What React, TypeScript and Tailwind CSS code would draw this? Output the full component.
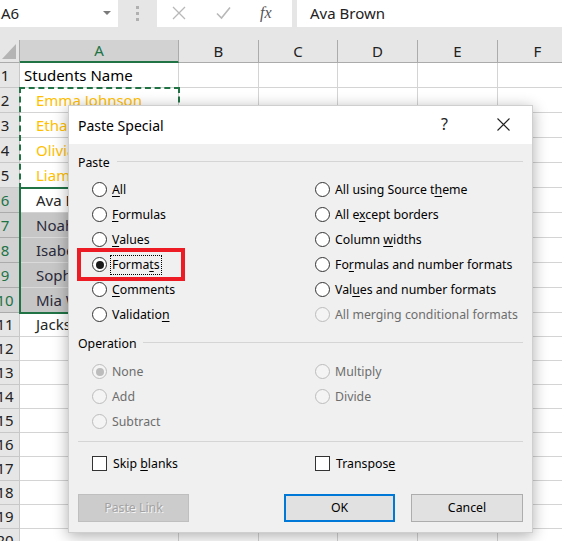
import React from 'react';

const GREEN = '#217346';

type Row = { n: number; text?: string; kind?: 'copy' | 'active' | 'sel' | 'plain' | 'head' };

const rows: Row[] = [
  { n: 1, text: 'Students Name', kind: 'head' },
  { n: 2, text: 'Emma Johnson', kind: 'copy' },
  { n: 3, text: 'Ethan Williams', kind: 'copy' },
  { n: 4, text: 'Olivia Smith', kind: 'copy' },
  { n: 5, text: 'Liam Jones', kind: 'copy' },
  { n: 6, text: 'Ava Brown', kind: 'active' },
  { n: 7, text: 'Noah Davis', kind: 'sel' },
  { n: 8, text: 'Isabella Garcia', kind: 'sel' },
  { n: 9, text: 'Sophia Miller', kind: 'sel' },
  { n: 10, text: 'Mia Wilson', kind: 'sel' },
  { n: 11, text: 'Jackson Taylor', kind: 'plain' },
  ...Array.from({ length: 9 }, (_, i) => ({ n: 12 + i })),
];

// underline one letter, like a Windows access key
function Acc({ text, at, disabled }: { text: string; at?: number; disabled?: boolean }) {
  if (at === undefined || disabled) return <span>{text}</span>;
  return (
    <span>
      {text.slice(0, at)}
      <span className="underline underline-offset-[2px]">{text[at]}</span>
      {text.slice(at + 1)}
    </span>
  );
}

function Radio({ label, at, checked, disabled, focus }: { label: string; at?: number; checked?: boolean; disabled?: boolean; focus?: boolean }) {
  return (
    <div className="flex h-[25px] items-center pl-[14px]">
      <span
        className={`flex h-[15px] w-[15px] shrink-0 items-center justify-center rounded-full border ${disabled ? 'border-[#bcbcbc] bg-[#f4f4f4]' : 'border-[#333] bg-white'}`}
      >
        {checked && <span className={`h-[8px] w-[8px] rounded-full ${disabled ? 'bg-[#bcbcbc]' : 'bg-[#1a1a1a]'}`} />}
      </span>
      <span
        className={`whitespace-nowrap leading-[18px] ${disabled ? 'text-[#6d6d6d]' : 'text-black'} ${focus ? 'ml-[4px] px-[1px] outline outline-1 outline-dotted outline-black' : 'ml-[5px]'}`}
      >
        <Acc text={label} at={at} disabled={disabled} />
      </span>
    </div>
  );
}

function Check({ label, at }: { label: string; at: number }) {
  return (
    <div className="flex h-[25px] items-center pl-[14px]">
      <span className="h-[15px] w-[15px] shrink-0 border border-[#333] bg-white" />
      <span className="ml-[6px] leading-[18px] text-black">
        <Acc text={label} at={at} />
      </span>
    </div>
  );
}

function GroupHead({ label, box, lab, line }: { label: string; box: string; lab: string; line: string }) {
  return (
    <div className={`flex items-start ${box}`}>
      <span className={`leading-[18px] text-black ${lab}`}>{label}</span>
      <span className={`ml-[7px] h-px flex-1 bg-[#d5d5d5] ${line}`} />
    </div>
  );
}

function FormulaBar() {
  return (
    <div className="relative h-[40px] bg-[#e6e6e6]">
      <div className="flex h-[27px]">
        <div className="relative flex w-[118px] items-center bg-white pl-[1px] text-[15px] text-[#222]">
          A6
          <span className="absolute left-[103px] top-[11px] h-0 w-0 border-x-[4px] border-t-[4px] border-x-transparent border-t-[#7a7a7a]" />
        </div>
        <div className="flex w-[39px] flex-col items-center justify-center gap-[3px]">
          <span className="h-[3px] w-[3px] bg-[#b0b0b0]" />
          <span className="h-[3px] w-[3px] bg-[#b0b0b0]" />
          <span className="h-[3px] w-[3px] bg-[#b0b0b0]" />
        </div>
        <div className="relative w-[135px] bg-white">
          <svg className="absolute left-[15px] top-[6px]" width="14" height="14" viewBox="0 0 14 14">
            <path d="M1 1 L13 13 M13 1 L1 13" stroke="#b8b8b8" strokeWidth="1.3" fill="none" />
          </svg>
          <svg className="absolute left-[59px] top-[6px]" width="15" height="14" viewBox="0 0 15 14">
            <path d="M1 7.5 L5.5 12 L14 1.5" stroke="#b8b8b8" strokeWidth="1.6" fill="none" />
          </svg>
          <span className="absolute left-[103px] top-[3px] font-['Liberation_Serif',serif] text-[16px] italic leading-[20px] text-[#555]">
            fx
          </span>
        </div>
        <div className="ml-[5px] flex flex-1 items-center bg-white pl-[13px] text-[15px] text-[#222]">Ava Brown</div>
      </div>
    </div>
  );
}

const colW = ['w-[159px]', 'w-[80px]', 'w-[79px]', 'w-[80px]', 'w-[80px]', 'w-[80px]'];
const letters = ['A', 'B', 'C', 'D', 'E', 'F'];

function cellTone(kind?: Row['kind']) {
  switch (kind) {
    case 'head':
      return 'pl-[4px] border-[#d4d4d4] bg-white text-black';
    case 'copy':
      return 'pl-[16px] border-[#d4d4d4] bg-white text-[#ffc000]';
    case 'sel':
      return 'pl-[16px] border-[#dadada] bg-[#c6c6c6] text-[#2a2a3a]';
    default:
      return 'pl-[16px] border-[#d4d4d4] bg-white text-[#262626]';
  }
}

function Sheet() {
  return (
    <div className="flex flex-col text-[15px]">
      <div className="flex h-[23px]">
        <div className="relative w-[20px] shrink-0 border-b border-r border-[#ababab] bg-[#e6e6e6]">
          <span className="absolute bottom-[3px] right-[3px] h-0 w-0 border-b-[15px] border-l-[14px] border-b-[#b4b4b4] border-l-transparent" />
        </div>
        {letters.map((l, i) => (
          <div
            key={l}
            className={`flex shrink-0 items-center justify-center border-r ${colW[i]} ${i === 0 ? 'border-b-2 border-r-[#ababab] bg-[#d2d2d2] text-[#217346]' : 'border-b border-[#ababab] bg-[#e6e6e6] text-[#222]'}`}
            style={i === 0 ? { borderBottomColor: GREEN } : undefined}
          >
            {l}
          </div>
        ))}
      </div>
      {rows.map((r) => {
        const h = r.n <= 10 ? 'h-[25px]' : 'h-[24px]';
        const inSel = r.kind === 'active' || r.kind === 'sel';
        return (
          <div key={r.n} className={`flex ${h}`}>
            <div
              className={`w-[20px] shrink-0 overflow-hidden border-b border-r ${inSel ? 'border-[#ababab] bg-[#d2d2d2] text-[#217346]' : 'border-[#c8c8c8] bg-[#e6e6e6] text-[#222]'}`}
            >
              <div className="ml-[-10px] flex h-full w-[30px] items-center justify-center">{r.n}</div>
            </div>
            <div className={`flex w-[159px] shrink-0 items-center whitespace-nowrap border-b border-r ${cellTone(r.kind)}`}>{r.text}</div>
            {colW.slice(1).map((w, i) => (
              <div key={i} className={`${w} shrink-0 border-b border-r border-[#d4d4d4] bg-white`} />
            ))}
          </div>
        );
      })}
    </div>
  );
}

function Dialog() {
  return (
    <div className="absolute left-[68px] top-[105px] flex h-[428px] w-[465px] flex-col border border-[#cfcfcf] bg-[#f0f0f0] text-[12.3px] shadow-[0_3px_14px_rgba(0,0,0,0.32)]">
      <div className="relative flex h-[38px] shrink-0 items-center bg-white pl-[9px] text-[14px] text-black">
        Paste Special
        <span className="absolute left-[372px] top-[8px] text-[16px] leading-[20px] text-[#222]">?</span>
        <svg className="absolute left-[428px] top-[12px]" width="13" height="13" viewBox="0 0 13 13">
          <path d="M0.5 0.5 L12.5 12.5 M12.5 0.5 L0.5 12.5" stroke="#222" strokeWidth="1.1" fill="none" />
        </svg>
      </div>
      <div className="flex flex-1 flex-col px-[9px]">
        <GroupHead label="Paste" box="h-[33px]" lab="mt-[10px]" line="mt-[17px]" />
        <div className="grid grid-cols-[223px_1fr]">
          <Radio label="All" at={0} />
          <Radio label="All using Source theme" at={18} />
          <Radio label="Formulas" at={0} />
          <Radio label="All except borders" at={5} />
          <Radio label="Values" at={0} />
          <Radio label="Column widths" at={7} />
          <Radio label="Formats" at={5} checked focus />
          <Radio label="Formulas and number formats" at={2} />
          <Radio label="Comments" at={0} />
          <Radio label="Values and number formats" at={3} />
          <Radio label="Validation" at={9} />
          <Radio label="All merging conditional formats" disabled />
        </div>
        <GroupHead label="Operation" box="h-[32px]" lab="mt-[8px]" line="mt-[15px]" />
        <div className="grid grid-cols-[223px_1fr]">
          <Radio label="None" checked disabled />
          <Radio label="Multiply" disabled />
          <Radio label="Add" disabled />
          <Radio label="Divide" disabled />
          <Radio label="Subtract" disabled />
          <div />
        </div>
        <div className="mt-[7px] h-px bg-[#d5d5d5]" />
        <div className="mt-[9px] grid grid-cols-[223px_1fr]">
          <Check label="Skip blanks" at={5} />
          <Check label="Transpose" at={8} />
        </div>
        <div className="mt-[18px] flex justify-between">
          <div className="flex h-[28px] w-[111px] items-center justify-center border border-[#bfbfbf] bg-[#cccccc] text-[#a3a3a3] [text-shadow:1px_1px_0_#f4f4f4]">
            Paste Link
          </div>
          <div className="flex gap-[16px]">
            <div className="flex h-[28px] w-[111px] items-center justify-center border-2 border-[#0078d7] bg-[#e1e1e1] text-black">OK</div>
            <div className="flex h-[28px] w-[112px] items-center justify-center border border-[#adadad] bg-[#e1e1e1] text-black">Cancel</div>
          </div>
        </div>
      </div>
      {/* red highlight round the Formats option */}
      <div className="pointer-events-none absolute left-[8px] top-[142px] h-[33px] w-[108px] border-4 border-[#ed1c24]" />
    </div>
  );
}

export default function App() {
  return (
    <div className="relative h-[541px] w-[562px] overflow-hidden bg-white font-['Noto_Sans',sans-serif]">
      <FormulaBar />
      <Sheet />
      {/* copy range marching ants A2:A5 */}
      <div className="pointer-events-none absolute left-[19px] top-[87px] h-[102px] w-[161px] border-2 border-dashed border-[#217346]" />
      {/* selection A6:A10 */}
      <div className="pointer-events-none absolute left-[19px] top-[187px] h-[127px] w-[161px] border-2 border-[#217346]" />
      <Dialog />
    </div>
  );
}
